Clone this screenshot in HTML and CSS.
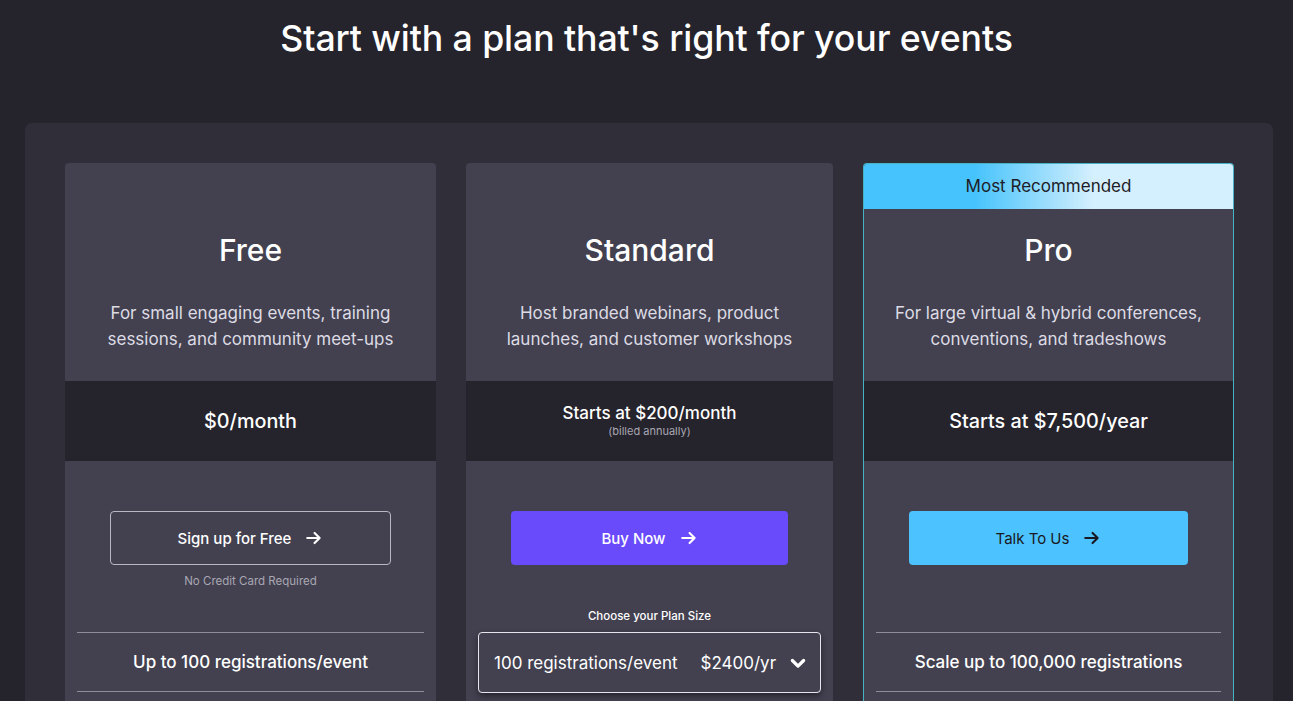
FILE: index.html
```html
<!DOCTYPE html>
<html>
<head>
<meta charset="utf-8">
<link rel="stylesheet" href="styles.css">
</head>
<body>
<h1 class="title">Start with a plan that's right for your events</h1>
<div class="panel">
  <div class="card">
    <div class="top">
      <h2 class="name">Free</h2>
      <p class="desc">For small engaging events, training<br>sessions, and community meet-ups</p>
    </div>
    <div class="price"><div class="price-main">$0/month</div></div>
    <div class="actions">
      <a class="btn btn-outline">Sign up for Free <svg class="arrow" viewBox="0 0 16 16"><path d="M2 8h11M8.5 3.5L13 8l-4.5 4.5"/></svg></a>
      <div class="note">No Credit Card Required</div>
    </div>
    <div class="feature">Up to 100 registrations/event</div>
  </div>
  <div class="card">
    <div class="top">
      <h2 class="name">Standard</h2>
      <p class="desc">Host branded webinars, product<br>launches, and customer workshops</p>
    </div>
    <div class="price"><div class="price-sm">Starts at $200/month</div><div class="billed">(billed annually)</div></div>
    <div class="actions actions-std">
      <a class="btn btn-purple">Buy Now <svg class="arrow" viewBox="0 0 16 16"><path d="M2 8h11M8.5 3.5L13 8l-4.5 4.5"/></svg></a>
      <div class="choose">Choose your Plan Size</div>
    </div>
    <div class="select">
      <span class="sel-reg">100 registrations/event</span>
      <span class="sel-price">$2400/yr</span>
      <svg class="chev" viewBox="0 0 16 16"><path d="M3.5 6l4.5 4.5L12.5 6"/></svg>
    </div>
  </div>
  <div class="card card-pro">
    <div class="top">
      <div class="banner">Most Recommended</div>
      <h2 class="name">Pro</h2>
      <p class="desc">For large virtual &amp; hybrid conferences,<br>conventions, and tradeshows</p>
    </div>
    <div class="price"><div class="price-main">Starts at $7,500/year</div></div>
    <div class="actions">
      <a class="btn btn-cyan">Talk To Us <svg class="arrow" viewBox="0 0 16 16"><path d="M2 8h11M8.5 3.5L13 8l-4.5 4.5"/></svg></a>
    </div>
    <div class="feature">Scale up to 100,000 registrations</div>
  </div>
</div>
</body>
</html>
```
FILE: styles.css
```css
* { box-sizing: border-box; }
html, body { margin: 0; padding: 0; }
body {
  background: #25232b;
  color: #fff;
  font-family: "Inter", "Lato", "Liberation Sans", sans-serif;
  height: 701px;
  overflow: hidden;
}
.title {
  margin: 0;
  padding-top: 14px;
  height: 62px;
  line-height: 48px;
  font-size: 35.7px;
  font-weight: 500;
  text-align: center;
  letter-spacing: -0.1px;
}
.panel {
  margin: 61px 20px 0 25px;
  background: #302e38;
  border-radius: 7px 7px 0 0;
  padding: 40px 0 0 40px;
  display: flex;
  gap: 30px;
  height: 700px;
}
.card {
  width: 371px;
  background: #434150;
  border-radius: 4px 4px 0 0;
  display: flex;
  flex-direction: column;
}
.card:nth-child(2) { width: 367px; }
.card-pro { border: 1px solid #45b3c2; border-bottom: none; }
.top {
  height: 218px;
  padding-top: 69px;
  text-align: center;
}
.card-pro .top { padding-top: 0; height: 217px; }
.banner {
  height: 45px;
  line-height: 45px;
  margin-bottom: 23px;
  color: #1e1c26;
  font-size: 17px;
  background: linear-gradient(90deg, #46c3fc 0%, #46c3fc 30%, #d4effd 62%, #d4effd 100%);
  border-radius: 3px 3px 0 0;
}
.name {
  margin: 0;
  font-size: 30px;
  line-height: 36px;
  font-weight: 500;
}
.desc {
  margin: 32px 0 0;
  font-size: 17px;
  line-height: 26px;
  color: #dddbe4;
}
.price {
  height: 80px;
  background: #25232c;
  display: flex;
  flex-direction: column;
  justify-content: center;
  align-items: center;
}
.price-main { font-size: 19.8px; font-weight: 500; }
.price-sm { font-size: 17px; font-weight: 500; line-height: 22px; margin-top: -3px; }
.billed { font-size: 11px; color: #a9a7b2; line-height: 14px; }
.actions {
  height: 171px;
  padding-top: 50px;
  display: flex;
  flex-direction: column;
  align-items: center;
}
.btn {
  height: 54px;
  border-radius: 4px;
  display: flex;
  align-items: center;
  justify-content: center;
  gap: 14px;
  font-size: 15px;
  font-weight: 500;
  color: #fff;
}
.btn-outline { width: 281px; border: 1px solid #b9b7c2; }
.btn-purple { width: 277px; background: #6a4bfb; }
.btn-cyan { width: 279px; background: #4cc3ff; color: #1a1822; font-weight: 400; }
.arrow { width: 18px; height: 18px; fill: none; stroke: currentColor; stroke-width: 1.9; stroke-linecap: round; stroke-linejoin: round; }
.note { margin-top: 8px; font-size: 11.5px; line-height: 16px; color: #a9a7b2; }
.choose { margin-top: 43px; font-size: 11.5px; line-height: 16px; color: #fff; font-weight: 500; }
.feature {
  margin: 0 12px;
  height: 60px;
  border-top: 1px solid #8f8d99;
  border-bottom: 1px solid #8f8d99;
  display: flex;
  align-items: center;
  justify-content: center;
  font-size: 17px;
  font-weight: 500;
}
.select {
  margin: 0 12px;
  height: 61px;
  border: 1px solid #e6e4ec;
  border-radius: 4px;
  box-shadow: 0 3px 6px rgba(0,0,0,0.45);
  display: flex;
  align-items: center;
  padding: 0 12px 0 15px;
  font-size: 17px;
}
.sel-reg { flex: none; }
.sel-price { margin-left: 23px; flex: none; }
.chev { width: 20px; height: 20px; margin-left: auto; fill: none; stroke: #fff; stroke-width: 2.6; stroke-linecap: round; stroke-linejoin: round; }
```
